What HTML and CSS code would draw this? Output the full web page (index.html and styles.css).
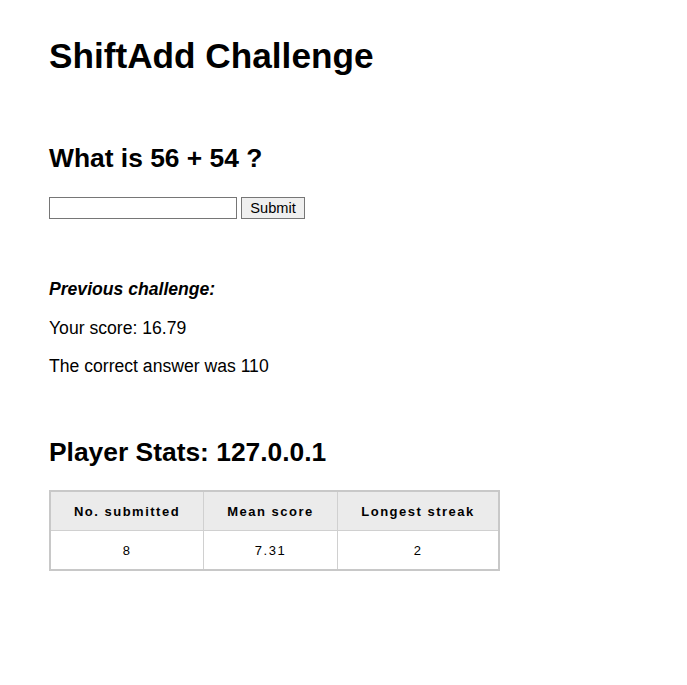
FILE: index.html
```html
<!DOCTYPE html>
<html>
<head>
<meta charset="utf-8">
<link rel="stylesheet" href="styles.css">
</head>
<body>
<div class="page">
  <h1 class="title">ShiftAdd Challenge</h1>
  <h2 class="question">What is 56 + 54 ?</h2>
  <form class="answer-form">
    <input class="answer-input" type="text"><button class="submit-btn" type="button">Submit</button>
  </form>
  <div class="previous">
    <p class="prev-title">Previous challenge:</p>
    <p class="prev-line">Your score: 16.79</p>
    <p class="prev-line">The correct answer was 110</p>
  </div>
  <h2 class="stats-title">Player Stats: 127.0.0.1</h2>
  <table class="stats">
    <thead>
      <tr><th class="c1">No. submitted</th><th class="c2">Mean score</th><th class="c3">Longest streak</th></tr>
    </thead>
    <tbody>
      <tr><td>8</td><td>7.31</td><td>2</td></tr>
    </tbody>
  </table>
</div>
</body>
</html>
```

FILE: styles.css
```css
html, body {
  margin: 0;
  padding: 0;
  background: #fff;
}
body {
  font-family: "Liberation Sans", Arial, sans-serif;
  color: #000;
}
.page {
  padding: 36px 49px 40px;
}
.title {
  font-size: 35.2px;
  font-weight: bold;
  margin: 0 0 67px;
  line-height: 40px;
}
.question {
  font-size: 26.4px;
  font-weight: bold;
  margin: 0 0 24px;
  line-height: 30px;
}
.answer-form {
  display: flex;
  align-items: center;
  margin: 0 0 60px;
}
.answer-input {
  box-sizing: border-box;
  width: 188px;
  height: 22px;
  border: 1px solid #767676;
  padding: 1px 2px;
  margin: 0 4px 0 0;
  font-size: 13px;
}
.submit-btn {
  box-sizing: border-box;
  height: 22px;
  width: 64px;
  border: 1px solid #767676;
  background: #efefef;
  font-family: "Liberation Sans", Arial, sans-serif;
  font-size: 14.6px;
  padding: 0;
  color: #000;
}
.previous p {
  margin: 0 0 18.5px;
  line-height: 20px;
  font-size: 17.6px;
}
.previous p:last-child {
  margin-bottom: 0;
}
.prev-title {
  font-weight: bold;
  font-style: italic;
}
.stats-title {
  font-size: 26.4px;
  font-weight: bold;
  margin: 61px 0 23px;
  line-height: 30px;
}
.stats {
  border-collapse: collapse;
  border: 2px solid #c8c8c8;
  font-size: 13px;
  letter-spacing: 1.5px;
  table-layout: fixed;
}
.stats th, .stats td {
  border: 1px solid #d0d0d0;
  height: 38px;
  padding: 0;
  text-align: center;
}
.stats th {
  background: #ebebeb;
  font-weight: bold;
}
.stats .c1 { width: 152px; }
.stats .c2 { width: 133px; }
.stats .c3 { width: 160px; }
```
